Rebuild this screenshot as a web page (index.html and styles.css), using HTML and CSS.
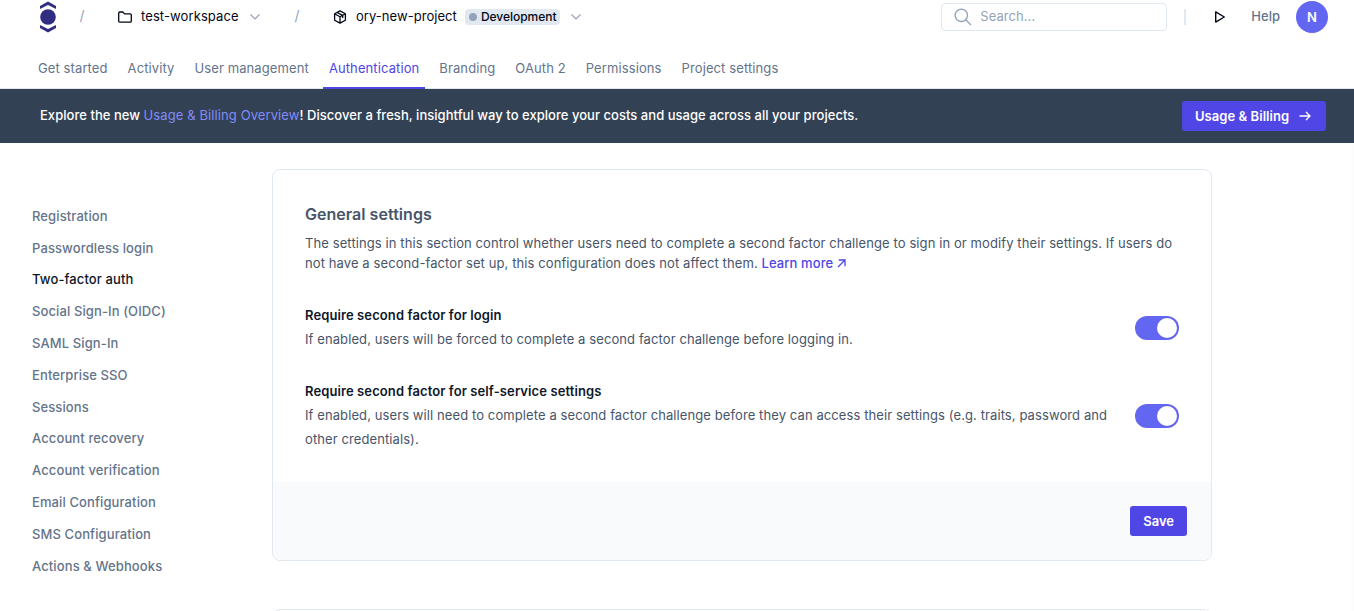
FILE: index.html
```html
<!DOCTYPE html>
<html lang="en">
<head>
<meta charset="utf-8">
<title>Two-factor auth</title>
<link rel="stylesheet" href="styles.css">
</head>
<body>
<header class="header">
  <div class="topbar">
    <svg class="logo" viewBox="0 0 16 32" width="16" height="32"><path d="M0 5 8 .5 16 5v3L8 4 0 8z"/><circle cx="8" cy="16" r="7.800"/><path d="M0 27 8 31.500 16 27v-3L8 28 0 24z"/></svg>
    <span class="slash slash-first">/</span>
    <div class="crumb crumb-workspace">
      <svg class="crumb-icon" viewBox="0 0 16 16" width="16" height="16"><path d="M1.700 12V4.200q0-1.200 1.200-1.200h2.900l1.800 1.900h5.500q1.200 0 1.200 1.200V12q0 1.200-1.200 1.200H2.900q-1.200 0-1.200-1.200z"/></svg>
      <span class="crumb-name">test-workspace</span>
      <svg class="chevron" viewBox="0 0 12 8" width="12" height="8"><path d="m1.500 1.500 4.500 4.500 4.500-4.500"/></svg>
    </div>
    <span class="slash slash-second">/</span>
    <div class="crumb crumb-project">
      <svg class="crumb-icon" viewBox="0 0 16 16" width="16" height="16"><path d="m8 1.900 5.400 2.900v6.400L8 14.100l-5.400-2.900V4.800zM2.600 4.800 8 7.700l5.400-2.900M8 7.700v6.400M5.200 3.500l5.500 2.900v2.500"/></svg>
      <span class="crumb-name">ory-new-project</span>
      <span class="badge"><i class="dot"></i><span class="badge-text">Development</span></span>
      <svg class="chevron" viewBox="0 0 12 8" width="12" height="8"><path d="m1.500 1.500 4.500 4.500 4.500-4.500"/></svg>
    </div>
    <div class="tools">
      <div class="search">
        <svg viewBox="0 0 18 18" width="18" height="18"><circle cx="7.300" cy="7.300" r="6.200"/><path d="m11.700 11.700 5.300 5.300"/></svg>
        <span class="search-text">Search...</span>
      </div>
      <span class="divider"></span>
      <svg class="play" viewBox="0 0 12 14" width="12" height="14"><path d="M1.700 1.900v10.200L10.300 7z"/></svg>
      <span class="help">Help</span>
      <span class="avatar">N</span>
    </div>
  </div>
  <nav class="tabs">
    <a class="tab">Get started</a>
    <a class="tab">Activity</a>
    <a class="tab">User management</a>
    <a class="tab active">Authentication</a>
    <a class="tab">Branding</a>
    <a class="tab">OAuth 2</a>
    <a class="tab">Permissions</a>
    <a class="tab">Project settings</a>
  </nav>
</header>
<div class="banner">
  <p class="banner-text">Explore the new <a>Usage &amp; Billing Overview</a>! Discover a fresh, insightful way to explore your costs and usage across all your projects.</p>
  <button class="button banner-button">Usage &amp; Billing <svg viewBox="0 0 12 10" width="12" height="10"><path d="M.5 5h10.500M7 1l4 4-4 4"/></svg></button>
</div>
<div class="page">
  <nav class="sidebar">
    <a>Registration</a>
    <a>Passwordless login</a>
    <a class="current">Two-factor auth</a>
    <a>Social Sign-In (OIDC)</a>
    <a>SAML Sign-In</a>
    <a>Enterprise SSO</a>
    <a>Sessions</a>
    <a>Account recovery</a>
    <a>Account verification</a>
    <a>Email Configuration</a>
    <a>SMS Configuration</a>
    <a>Actions &amp; Webhooks</a>
  </nav>
  <main class="content">
    <section class="card">
      <div class="card-body">
        <h2>General settings</h2>
        <p class="intro">The settings in this section control whether users need to complete a second factor challenge to sign in or modify their settings. If users do<br>not have a second-factor set up, this configuration does not affect them. <a>Learn more <svg viewBox="0 0 9 9" width="9" height="9"><path d="M1 8 8 1M1.800 1H8v6.200"/></svg></a></p>
        <div class="setting">
          <div class="setting-text">
            <h3>Require second factor for login</h3>
            <p>If enabled, users will be forced to complete a second factor challenge before logging in.</p>
          </div>
          <span class="toggle"></span>
        </div>
        <div class="setting">
          <div class="setting-text">
            <h3>Require second factor for self-service settings</h3>
            <p>If enabled, users will need to complete a second factor challenge before they can access their settings (e.g. traits, password and<br>other credentials).</p>
          </div>
          <span class="toggle"></span>
        </div>
      </div>
      <footer class="card-footer"><button class="button">Save</button></footer>
    </section>
    <section class="card next-card"></section>
  </main>
</div>
</body>
</html>
```
FILE: styles.css
```css
* { box-sizing: border-box; }
body {
  margin: 0;
  height: 611px;
  overflow: hidden;
  background: #fff;
  color: #475569;
  font: 13px/20px Inter, "Liberation Sans", sans-serif;
}
h2, h3, p { margin: 0; }
svg { fill: none; flex: none; }

.header { height: 89px; border-bottom: 1px solid #e2e8f0; }
.topbar { display: flex; align-items: center; height: 33px; padding: 0 26px 0 40px; }
.logo { fill: #312e81; margin-top: 1px; }
.slash { color: #94a3b8; font-size: 14px; width: 6px; text-align: center; padding-bottom: 1px; }
.slash-first { margin-left: 23px; }
.slash-second { margin-left: 33px; }
.crumb { display: flex; align-items: center; color: #020617; }
.crumb-workspace { margin-left: 32px; width: 144px; }
.crumb-project { margin-left: 32px; }
.crumb-icon { stroke: #020617; stroke-width: 1.3; stroke-linejoin: round; }
.crumb-name { margin-left: 8px; padding-bottom: 1px; white-space: nowrap; letter-spacing: 0.1px; }
.crumb-project .crumb-name { letter-spacing: 0.05px; }
.chevron { margin-left: auto; stroke: #94a3b8; stroke-width: 1.2; }
.crumb-project .chevron { margin-left: 10px; }
.badge {
  display: flex; align-items: center; gap: 4px;
  margin-left: 8px; padding: 0 4px; width: 95px; height: 16px;
  border-radius: 4px; background: #e2e8f0;
  font-size: 12px; font-weight: 500; letter-spacing: -0.03px;
}
.dot { width: 8px; height: 8px; border-radius: 50%; background: #94a3b8; flex: none; }
.tools { display: flex; align-items: center; margin-left: auto; }
.search {
  display: flex; align-items: center; gap: 8px;
  width: 226px; height: 28px; padding-left: 12px;
  border: 1px solid #e2e8f0; border-radius: 4px;
  color: #94a3b8;
}
.search svg { stroke: #94a3b8; stroke-width: 1.3; }
.search-text { padding-bottom: 1px; letter-spacing: 0.05px; }
.divider { width: 2px; height: 16px; margin-left: 17px; background: #e2e8f0; }
.play { margin-left: 28px; stroke: #020617; stroke-width: 1.4; stroke-linejoin: round; }
.help { margin-left: 25px; padding-bottom: 1px; color: #64748b; font-weight: 450; }
.avatar {
  display: grid; place-items: center;
  width: 32px; height: 32px; margin-left: 16px; margin-top: 1px; padding-bottom: 1px;
  border-radius: 50%; background: #6366f1; color: #fff; font-weight: 600;
}
.tabs { display: flex; gap: 8px; height: 56px; padding-left: 32px; }
.tab {
  height: 56px; padding: 25px 6px 0; white-space: nowrap; color: #64748b; letter-spacing: 0.105px;
}
.tab.active { color: #4f46e5; border-bottom: 2px solid #4f46e5; }

.banner {
  display: flex; align-items: center; justify-content: space-between;
  height: 54px; padding: 0 28px 0 40px; background: #334155; color: #fff;
}
.banner-text { padding-bottom: 2px; font-weight: 500; white-space: nowrap; letter-spacing: 0.035px; }
.banner-text a { color: #818cf8; font-weight: 400; letter-spacing: 0.1px; }
.button {
  display: flex; align-items: center; justify-content: center; gap: 10px;
  height: 30px; padding: 0 13px; border: 0; border-radius: 3px;
  background: #4f46e5; color: #fff; font: 600 13px/20px Inter, "Liberation Sans", sans-serif;
  white-space: nowrap;
}
.banner-button { width: 144px; justify-content: space-between; padding-right: 15px; letter-spacing: 0.05px; gap: 0; }
.button svg { stroke: #fff; stroke-width: 1.3; }

.page { display: flex; height: 468px; padding-left: 32px; border-right: 3px solid #fcfcfc; }
.sidebar { display: flex; flex-direction: column; width: 240px; padding-top: 62.800px; }
.sidebar a { height: 31.800px; flex: none; color: #64748b; font-weight: 500; letter-spacing: 0.11px; }
.sidebar .current { color: #0f172a; }
.content { width: 940px; padding-top: 26px; }
.card { border: 1px solid #e2e8f0; border-radius: 8px; overflow: hidden; }
.card-body { height: 312px; padding: 34px 32px 0; }
.card-body h2 { font-size: 16px; line-height: 20px; font-weight: 600; letter-spacing: 0.04px; }
.intro { margin-top: 9px; white-space: nowrap; letter-spacing: 0.098px; }
.intro a { color: #4f46e5; font-weight: 450; }
.intro svg { stroke: #4f46e5; stroke-width: 1.3; }
.setting { display: flex; align-items: center; justify-content: space-between; margin-top: 30px; }
.setting + .setting { margin-top: 28px; }
.setting h3 { color: #0f172a; font-size: 13px; line-height: 24px; font-weight: 600; letter-spacing: 0.1px; }
.setting p { line-height: 24px; white-space: nowrap; letter-spacing: 0.096px; }
.toggle { width: 44px; height: 24px; margin-top: 1px; border-radius: 12px; background: #6366f1; display: flex; align-items: center; justify-content: flex-end; padding-right: 2px; }
.toggle::before { content: ""; width: 20px; height: 20px; border-radius: 50%; background: #fff; }
.card-footer { display: flex; align-items: center; justify-content: flex-end; height: 78px; padding-right: 24px; background: #f8fafc; }
.next-card { height: 80px; margin-top: 48px; }
```
